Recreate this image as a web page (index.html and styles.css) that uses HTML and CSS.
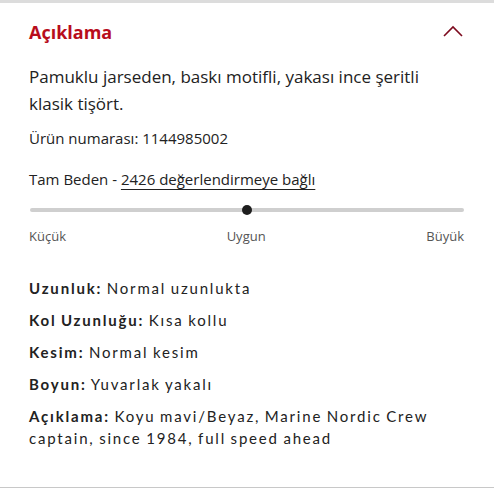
FILE: index.html
```html
<!DOCTYPE html>
<html lang="tr">
<head>
<meta charset="utf-8">
<link rel="stylesheet" href="styles.css">
</head>
<body>
<div class="topbar"></div>
<section class="panel">
  <header class="head">
    <h2 class="title">Açıklama</h2>
    <svg class="chev" width="20" height="12" viewBox="0 0 20 12"><path d="M1 11 L10 2 L19 11" fill="none" stroke="#7d0a1e" stroke-width="1.6"/></svg>
  </header>
  <p class="lead">Pamuklu jarseden, baskı motifli, yakası ince şeritli klasik tişört.</p>
  <p class="num">Ürün numarası: 1144985002</p>
  <p class="fit">Tam Beden - <span class="link">2426 değerlendirmeye bağlı</span></p>
  <div class="slider"><div class="track"></div><div class="dot"></div></div>
  <div class="labels"><span>Küçük</span><span>Uygun</span><span>Büyük</span></div>
  <div class="specs">
    <p class="row"><strong>Uzunluk:</strong> Normal uzunlukta</p>
    <p class="row"><strong>Kol Uzunluğu:</strong> Kısa kollu</p>
    <p class="row"><strong>Kesim:</strong> Normal kesim</p>
    <p class="row"><strong>Boyun:</strong> Yuvarlak yakalı</p>
    <p class="row"><strong>Açıklama:</strong> Koyu mavi/Beyaz, Marine Nordic Crew captain, since 1984, full speed ahead</p>
  </div>
</section>
<div class="bottomline"></div>
</body>
</html>
```
FILE: styles.css
```css
html, body { margin: 0; padding: 0; background: #fff; }
body { font-family: "Open Sans", "Noto Sans", sans-serif; color: #222; width: 494px; height: 490px; overflow: hidden; }
.topbar { height: 3px; background: #dcdcdc; }
.panel { padding: 0 30px 0 29px; height: 484px; box-sizing: border-box; }
.head { display: flex; justify-content: space-between; align-items: center; height: 58px; }
.title { margin: 0; font-size: 18px; font-weight: 700; color: #b80d1c; }
.chev { margin-right: 1px; margin-top: -2px; }
.lead { margin: 2px 0 0; font-size: 17px; line-height: 27px; color: #222; padding-right: 4px; }
.num { margin: 12px 0 0; font-size: 15px; line-height: 18px; }
.fit { margin: 23px 0 0; font-size: 15px; line-height: 18px; }
.link { text-decoration: underline; text-underline-offset: 4px; text-decoration-thickness: 1px; }
.slider { position: relative; height: 10px; margin-top: 17px; }
.track { position: absolute; left: 1px; right: 0; top: 3px; height: 4px; border-radius: 2px; background: #cfcfcf; }
.dot { position: absolute; left: 213px; top: 0; width: 10px; height: 10px; border-radius: 50%; background: #1e1e1e; }
.labels { display: flex; justify-content: space-between; margin-top: 13px; font-size: 13px; line-height: 16px; color: #555; }
.specs { margin: 33px 0 0; font-family: "Lato", "Noto Sans", sans-serif; font-size: 15px; letter-spacing: 1.8px; word-spacing: -1px; }
.row { margin: 0 0 10px; line-height: 22px; }
.row strong { font-weight: 700; }
.bottomline { height: 1px; background: #c8c8c8; }
```
